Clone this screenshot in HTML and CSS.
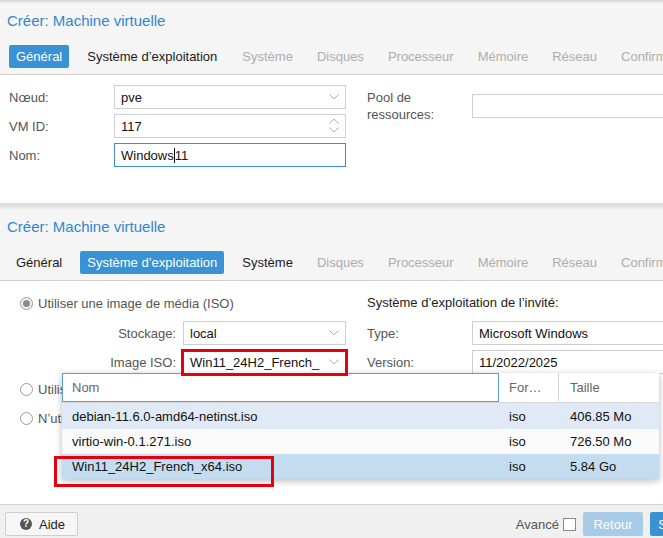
FILE: index.html
```html
<!DOCTYPE html>
<html lang="fr">
<head>
<meta charset="utf-8">
<title>Créer: Machine virtuelle</title>
<link rel="stylesheet" href="styles.css">
</head>
<body>
<div class="frame">
  <div class="topstrip"></div>

  <section class="wizard">
    <header class="wiz-head">
      <div class="wiz-title">Créer: Machine virtuelle</div>
      <nav class="tabs">
        <span class="tab active">Général</span>
        <span class="tab">Système d’exploitation</span>
        <span class="tab disabled">Système</span>
        <span class="tab disabled">Disques</span>
        <span class="tab disabled">Processeur</span>
        <span class="tab disabled">Mémoire</span>
        <span class="tab disabled">Réseau</span>
        <span class="tab disabled">Confirmation</span>
      </nav>
    </header>
    <div class="wiz-body body-general">
      <div class="col col-left">
        <div class="frow">
          <span class="flabel">Nœud:</span>
          <div class="field">pve
            <svg class="chev" width="10" height="6" viewBox="0 0 10 6"><polyline points="0.5,0.5 5,5 9.5,0.5" fill="none" stroke="#b0b0b0"/></svg>
          </div>
        </div>
        <div class="frow">
          <span class="flabel">VM ID:</span>
          <div class="field">117
            <svg class="spin" width="10" height="15" viewBox="0 0 10 15"><polyline points="0.5,5.5 5,1 9.5,5.5" fill="none" stroke="#b0b0b0"/><polyline points="0.5,9.5 5,14 9.5,9.5" fill="none" stroke="#b0b0b0"/></svg>
          </div>
        </div>
        <div class="frow">
          <span class="flabel">Nom:</span>
          <div class="field focus">Windows<span class="caret"></span>11</div>
        </div>
      </div>
      <div class="col col-right col-pool">
        <div class="frow frow-tall">
          <span class="flabel">Pool de<br>ressources:</span>
          <div class="field"></div>
        </div>
      </div>
    </div>
  </section>

  <div class="separator"></div>

  <section class="wizard">
    <header class="wiz-head">
      <div class="wiz-title">Créer: Machine virtuelle</div>
      <nav class="tabs">
        <span class="tab">Général</span>
        <span class="tab active">Système d’exploitation</span>
        <span class="tab">Système</span>
        <span class="tab disabled">Disques</span>
        <span class="tab disabled">Processeur</span>
        <span class="tab disabled">Mémoire</span>
        <span class="tab disabled">Réseau</span>
        <span class="tab disabled">Confirmation</span>
      </nav>
    </header>
    <div class="wiz-body body-os">
      <div class="col col-left">
        <div class="rrow"><span class="radio checked"></span><span class="rtext">Utiliser une image de média (ISO)</span></div>
        <div class="frow first">
          <span class="flabel right">Stockage:</span>
          <div class="field">local
            <svg class="chev" width="10" height="6" viewBox="0 0 10 6"><polyline points="0.5,0.5 5,5 9.5,0.5" fill="none" stroke="#b0b0b0"/></svg>
          </div>
        </div>
        <div class="frow">
          <span class="flabel right">Image ISO:</span>
          <div class="field">Win11_24H2_French_
            <svg class="chev" width="10" height="6" viewBox="0 0 10 6"><polyline points="0.5,0.5 5,5 9.5,0.5" fill="none" stroke="#b0b0b0"/></svg>
          </div>
        </div>
        <div class="rrow r2"><span class="radio"></span><span class="rtext under">Utiliser un lecteur CD/DVD physique</span></div>
        <div class="rrow r3"><span class="radio"></span><span class="rtext under">N’utiliser aucun média</span></div>
      </div>
      <div class="col col-right">
        <div class="rhead">Système d’exploitation de l’invité:</div>
        <div class="frow first">
          <span class="flabel">Type:</span>
          <div class="field">Microsoft Windows</div>
        </div>
        <div class="frow">
          <span class="flabel">Version:</span>
          <div class="field">11/2022/2025</div>
        </div>
      </div>

      <div class="picker">
        <div class="prow phead">
          <div class="c-nom pfocus">Nom</div>
          <div class="c-fmt">For…</div>
          <div class="c-size">Taille</div>
        </div>
        <div class="prow alt h26">
          <div class="c-nom">debian-11.6.0-amd64-netinst.iso</div>
          <div class="c-fmt">iso</div>
          <div class="c-size">406.85 Mo</div>
        </div>
        <div class="prow plain">
          <div class="c-nom">virtio-win-0.1.271.iso</div>
          <div class="c-fmt">iso</div>
          <div class="c-size">726.50 Mo</div>
        </div>
        <div class="prow sel">
          <div class="c-nom">Win11_24H2_French_x64.iso</div>
          <div class="c-fmt">iso</div>
          <div class="c-size">5.84 Go</div>
        </div>
      </div>

      <div class="mark mark-iso"></div>
      <div class="mark mark-row"></div>
    </div>

    <footer class="wiz-foot">
      <button class="btn btn-help"><span class="qicon">?</span>Aide</button>
      <div class="foot-right">
        <span class="adv">Avancé</span>
        <span class="check"></span>
        <button class="btn btn-back">Retour</button>
        <button class="btn btn-next">Suivant</button>
      </div>
    </footer>
  </section>
</div>
</body>
</html>
```

FILE: styles.css
```css
* { box-sizing: border-box; margin: 0; padding: 0; }
html, body { width: 663px; height: 538px; overflow: hidden; background: #fff; }
body { font-family: "Liberation Sans", Arial, sans-serif; font-size: 13px; color: #111; }

.frame { width: 720px; }

.topstrip { height: 3px; background: linear-gradient(#d6d6d6, #ebebeb); }

.wiz-head { background: #f5f5f5; padding: 9px 0 6px; border-bottom: 1px solid #d0d0d0; }
.wiz-title { padding-left: 7px; font-size: 15px; line-height: 18px; height: 18px; color: #2f88cf; white-space: nowrap; }
.tabs { display: flex; gap: 10px; margin-top: 15px; padding-left: 9px; white-space: nowrap; }
.tab { height: 23px; line-height: 23px; padding: 0 7px; color: #1a1a1a; border-radius: 2px; }
.tab:nth-child(-n+2) { margin-right: 1px; }
.tab.active { background: #3892d4; color: #fff; }
.tab.disabled { color: #adadad; }

.wiz-body { display: flex; padding-left: 9px; }
.body-general { height: 128px; padding-top: 10px; }
.body-os { height: 223px; padding-top: 12px; position: relative; }

.col-left { width: 337px; flex: none; }
.col-right { margin-left: 21px; flex: 1; padding-right: 20px; }
.col-pool { padding-top: 4px; }

.frow { display: flex; align-items: center; height: 24px; margin-bottom: 5px; }
.frow.first { margin-top: 8px; }
.frow-tall { height: 34px; }
.flabel { width: 105px; flex: none; color: #555; line-height: 17px; }
.flabel.right { width: 174px; text-align: right; padding-right: 7px; }

.field { flex: 1; height: 24px; border: 1px solid #cfcfcf; background: #fff; display: flex; align-items: center; padding-left: 6px; position: relative; color: #111; white-space: nowrap; }
.field.focus { border-color: #3f8fd0; }
.chev { position: absolute; right: 6px; top: 8px; }
.spin { position: absolute; right: 6px; top: 3px; }
.caret { display: inline-block; width: 1px; height: 15px; background: #000; }

.rrow { display: flex; align-items: center; height: 20px; padding-left: 11px; color: #555; white-space: nowrap; }
.rrow.r2 { margin-top: 3px; }
.rrow.r3 { margin-top: 9px; }
.rtext.under { display: block; width: 24px; overflow: hidden; }
.radio { width: 13px; height: 13px; border: 1px solid #9a9a9a; border-radius: 50%; background: #fff; margin-right: 5px; position: relative; flex: none; }
.radio.checked { background: #f2f2f2; }
.radio.checked::after { content: ""; position: absolute; left: 2px; top: 2px; width: 7px; height: 7px; border-radius: 50%; background: #8c8c8c; }
.rhead { height: 20px; line-height: 20px; color: #222; white-space: nowrap; }

.picker { position: absolute; left: 62px; top: 92px; width: 597px; background: #fff; box-shadow: 0 2px 7px rgba(0,0,0,0.28); }
.prow { display: flex; height: 25px; align-items: center; }
.prow > div { height: 100%; display: flex; align-items: center; padding-left: 10px; white-space: nowrap; overflow: hidden; }
.c-nom { width: 437px; }
.c-fmt { width: 60px; }
.c-size { width: 100px; padding-left: 11px !important; }
.phead { height: 30px; border-bottom: 1px solid #d6d6d6; color: #666; }
.phead .c-fmt { border-right: 1px solid #d6d6d6; }
.pfocus { border: 1px solid #5d9fd8; padding-left: 9px !important; }
.prow.h26 { height: 26px; }
.alt { background: #e0eaf6; }
.plain { background: #fafafa; }
.sel { background: #c3dcf0; }

.mark { position: absolute; border: 3px solid #e4000f; }
.mark-iso { left: 181px; top: 68px; width: 167px; height: 27px; }
.mark-row { left: 54px; top: 175px; width: 220px; height: 31px; }

.wiz-foot { height: 34px; border-top: 1px solid #d0d0d0; background: #f0f0f0; display: flex; align-items: flex-start; padding: 7px 10px 0 5px; }
.btn { height: 24px; border: 1px solid #cfcfcf; border-radius: 2px; font-family: inherit; font-size: 13px; display: flex; align-items: center; justify-content: center; }
.btn-help { width: 73px; background: #f6f6f6; color: #222; justify-content: flex-start; padding-left: 14px; }
.qicon { width: 12px; height: 12px; border-radius: 50%; background: #555; color: #fff; font-size: 10px; font-weight: bold; line-height: 12px; text-align: center; margin-right: 7px; }
.foot-right { margin-left: auto; display: flex; align-items: center; height: 24px; }
.adv { color: #555; }
.check { width: 13px; height: 13px; border: 1px solid #8a8a8a; background: #fff; margin-left: 4px; }
.btn-back { width: 60px; margin-left: 7px; background: #a8cbe8; border-color: #a8cbe8; color: #fff; }
.btn-next { width: 60px; margin-left: 7px; background: #3892d4; border-color: #3892d4; color: #fff; }

.separator { height: 6px; background: linear-gradient(#d8d8d8, #eeeeee); }
```
